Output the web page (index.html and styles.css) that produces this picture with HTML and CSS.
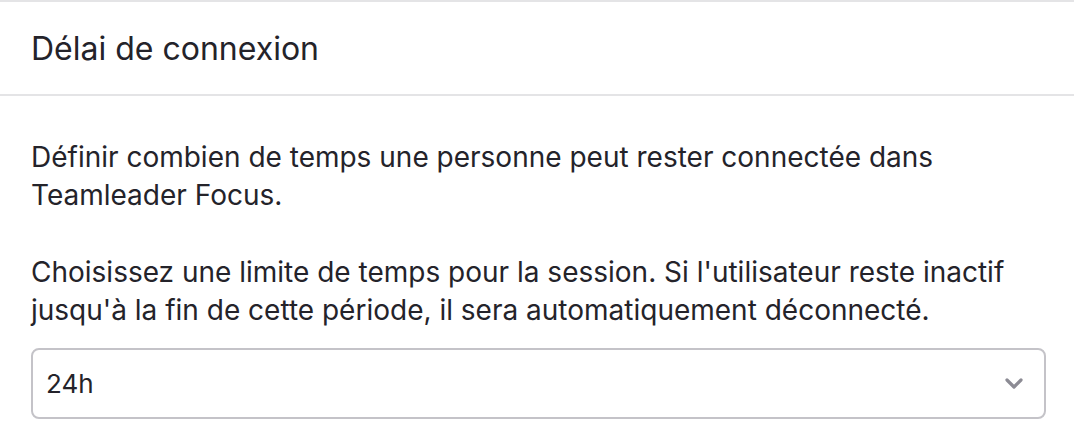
FILE: index.html
```html
<!DOCTYPE html>
<html lang="fr">
<head>
    <meta charset="UTF-8">
    <meta name="viewport" content="width=device-width, initial-scale=1.0">
    <title>Délai de connexion</title>
    <link rel="stylesheet" href="styles.css">
</head>
<body>
    <section class="panel">
        <header class="panel-header">
            <h2>Délai de connexion</h2>
        </header>

        <div class="panel-body">
            <p>Définir combien de temps une personne peut rester connectée dans Teamleader Focus.</p>
            <p>Choisissez une limite de temps pour la session. Si l'utilisateur reste inactif jusqu'à la fin de cette période, il sera automatiquement déconnecté.</p>

            <div class="select">
                <span class="select-value">24h</span>
                <svg class="select-arrow" width="18" height="12" viewBox="0 0 18 12">
                    <path d="M2 2 L9 9 L16 2" fill="none" stroke="#8c8b94" stroke-width="3.2" stroke-linecap="round" stroke-linejoin="round"/>
                </svg>
            </div>
        </div>
    </section>
</body>
</html>
```

FILE: styles.css
```css
body {
    font-family: 'Inter', 'Liberation Sans', sans-serif;
    margin: 0;
    padding: 0;
    background-color: #fff;
    color: #24232a;
}

.panel {
    border-top: 2px solid #e4e4e6;
}

.panel-header {
    height: 92px;
    display: flex;
    align-items: center;
    padding: 0 31px;
    border-bottom: 2px solid #e4e4e6;
}

.panel-header h2 {
    margin: 0;
    font-size: 32px;
    font-weight: 400;
}

.panel-body {
    padding: 42px 28px 0 31px;
}

.panel-body p {
    margin: 0 0 39px;
    font-size: 28px;
    line-height: 38px;
}

.panel-body p:last-of-type {
    margin-bottom: 19px;
}

.select {
    height: 67px;
    border: 2px solid #c4c3c8;
    border-radius: 8px;
    display: flex;
    align-items: center;
    justify-content: space-between;
    padding: 0 21px 0 13px;
}

.select-value {
    font-size: 26px;
}

.select-arrow {
    display: block;
}
```
